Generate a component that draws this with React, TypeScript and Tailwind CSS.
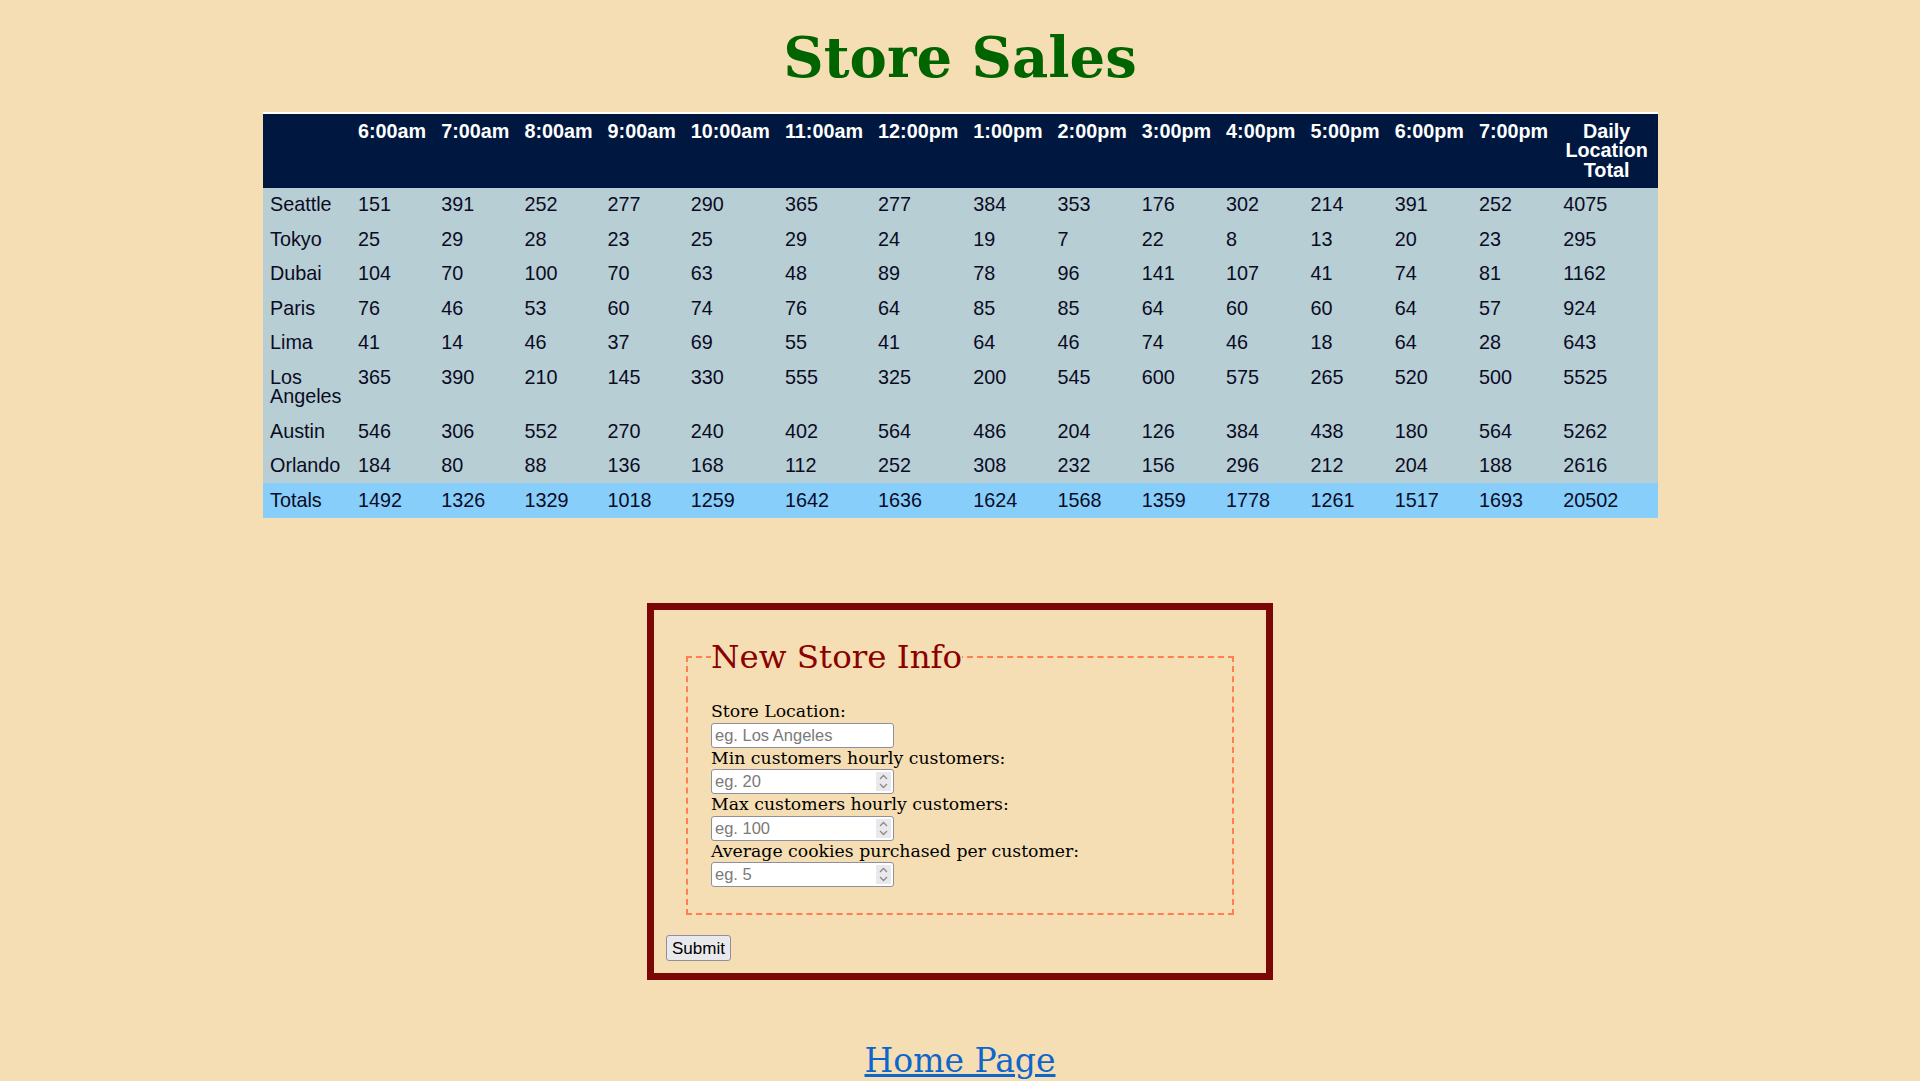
const hours = [
  "6:00am",
  "7:00am",
  "8:00am",
  "9:00am",
  "10:00am",
  "11:00am",
  "12:00pm",
  "1:00pm",
  "2:00pm",
  "3:00pm",
  "4:00pm",
  "5:00pm",
  "6:00pm",
  "7:00pm",
];

const stores: { name: string; sales: number[]; total: number }[] = [
  { name: "Seattle", sales: [151, 391, 252, 277, 290, 365, 277, 384, 353, 176, 302, 214, 391, 252], total: 4075 },
  { name: "Tokyo", sales: [25, 29, 28, 23, 25, 29, 24, 19, 7, 22, 8, 13, 20, 23], total: 295 },
  { name: "Dubai", sales: [104, 70, 100, 70, 63, 48, 89, 78, 96, 141, 107, 41, 74, 81], total: 1162 },
  { name: "Paris", sales: [76, 46, 53, 60, 74, 76, 64, 85, 85, 64, 60, 60, 64, 57], total: 924 },
  { name: "Lima", sales: [41, 14, 46, 37, 69, 55, 41, 64, 46, 74, 46, 18, 64, 28], total: 643 },
  { name: "Los Angeles", sales: [365, 390, 210, 145, 330, 555, 325, 200, 545, 600, 575, 265, 520, 500], total: 5525 },
  { name: "Austin", sales: [546, 306, 552, 270, 240, 402, 564, 486, 204, 126, 384, 438, 180, 564], total: 5262 },
  { name: "Orlando", sales: [184, 80, 88, 136, 168, 112, 252, 308, 232, 156, 296, 212, 204, 188], total: 2616 },
];

const hourlyTotals = [1492, 1326, 1329, 1018, 1259, 1642, 1636, 1624, 1568, 1359, 1778, 1261, 1517, 1693];

function Spinner() {
  return (
    <span className="pointer-events-none absolute bottom-[3px] right-[3px] top-[3px] flex w-[15px] flex-col items-center justify-center gap-[3px] bg-[#e9e9ed]">
      <svg width="9" height="6" viewBox="0 0 9 6" fill="none" stroke="#8a8a8a" strokeWidth="1.3">
        <polyline points="1,5 4.5,1.5 8,5" />
      </svg>
      <svg width="9" height="6" viewBox="0 0 9 6" fill="none" stroke="#8a8a8a" strokeWidth="1.3">
        <polyline points="1,1 4.5,4.5 8,1" />
      </svg>
    </span>
  );
}

function Field({ label, placeholder, number }: { label: string; placeholder: string; number?: boolean }) {
  return (
    <div>
      <label className="block leading-[21.5px]">{label}</label>
      <div className="relative w-[183px]">
        <input
          type="text"
          placeholder={placeholder}
          className="block h-[25px] w-full rounded-[3px] border border-[#8f8f9d] bg-white px-[3px] font-['Liberation_Sans',Arial,sans-serif] text-[16.5px] text-black placeholder:text-[#7a7a7a]"
        />
        {number && <Spinner />}
      </div>
    </div>
  );
}

export default function App() {
  const cell = "px-[7.5px] py-[7.5px] text-left align-top";
  return (
    <div className="min-h-screen bg-[#f5deb3] pb-10 font-['DejaVu_Serif',Georgia,serif]">
      <h1 className="mb-[22px] pt-[25px] text-center text-[56px] font-bold leading-[65px] text-[#006400]">
        Store Sales
      </h1>

      <table className="mx-auto w-[1395px] font-['Liberation_Sans',Arial,sans-serif] text-[19.8px] leading-[19.5px] text-[#0b0b24]">
        <thead>
          <tr className="bg-[#001840] text-white">
            <th className="border-t-2 border-white px-[7.5px] py-[7.5px] align-top"></th>
            {hours.map((h) => (
              <th key={h} className="border-t-2 border-white px-[7.5px] py-[7.5px] text-center align-top font-bold">
                {h}
              </th>
            ))}
            <th className="border-t-2 border-white px-[7.5px] py-[7.5px] text-center align-top font-bold">
              Daily Location Total
            </th>
          </tr>
        </thead>
        <tbody className="bg-[#b7ced5]">
          {stores.map((s) => (
            <tr key={s.name}>
              <td className={cell}>{s.name}</td>
              {s.sales.map((n, i) => (
                <td key={i} className={cell}>
                  {n}
                </td>
              ))}
              <td className={cell}>{s.total}</td>
            </tr>
          ))}
        </tbody>
        <tfoot>
          <tr className="bg-[#87cefa]">
            <td className={cell}>Totals</td>
            {hourlyTotals.map((n, i) => (
              <td key={i} className={cell}>
                {n}
              </td>
            ))}
            <td className={cell}>20502</td>
          </tr>
        </tfoot>
      </table>

      <form className="mx-auto mt-[85px] w-[626px] border-[7px] border-[#7b0707] px-[12px] pb-[11px] pt-[23px] text-[17.3px] text-black">
        <fieldset className="mx-[20px] border-2 border-dashed border-[#ff7f50] px-[23px] pb-[26px] pt-[20px]">
          <legend className="text-[32.5px] text-[#8b0000]">New Store Info</legend>
          <Field label="Store Location:" placeholder="eg. Los Angeles" />
          <Field label="Min customers hourly customers:" placeholder="eg. 20" number />
          <Field label="Max customers hourly customers:" placeholder="eg. 100" number />
          <Field label="Average cookies purchased per customer:" placeholder="eg. 5" number />
        </fieldset>
        <button
          type="button"
          className="mt-[20px] h-[26px] w-[65px] rounded-[3px] border border-[#8f8f9d] bg-[#e9e9ed] font-['Liberation_Sans',Arial,sans-serif] text-[17px] text-black"
        >
          Submit
        </button>
      </form>

      <p className="mt-[56px] text-center">
        <a href="#" className="text-[33px] text-[#0e66cc] underline">
          Home Page
        </a>
      </p>
    </div>
  );
}
